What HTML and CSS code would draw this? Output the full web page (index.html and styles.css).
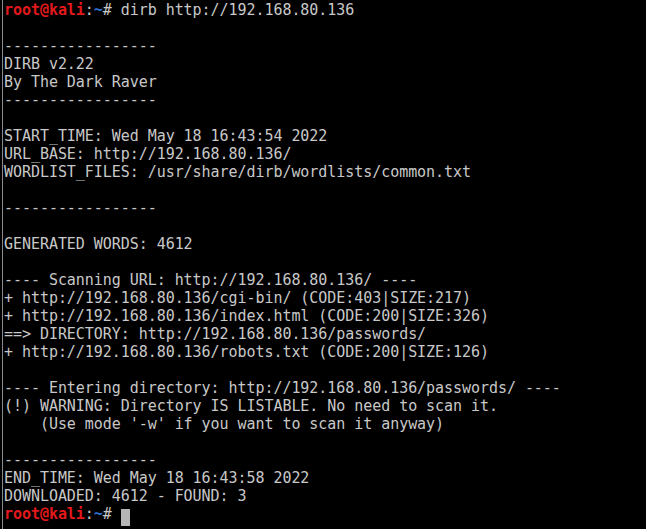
FILE: index.html
```html
<!DOCTYPE html>
<html>
<head>
<meta charset="utf-8">
<link rel="stylesheet" href="styles.css">
</head>
<body>
<div class="term">
<pre class="out"><span class="user">root@kali</span>:<span class="path">~</span># dirb http://192.168.80.136

-----------------
DIRB v2.22    
By The Dark Raver
-----------------

START_TIME: Wed May 18 16:43:54 2022
URL_BASE: http://192.168.80.136/
WORDLIST_FILES: /usr/share/dirb/wordlists/common.txt

-----------------

GENERATED WORDS: 4612

---- Scanning URL: http://192.168.80.136/ ----
+ http://192.168.80.136/cgi-bin/ (CODE:403|SIZE:217)
+ http://192.168.80.136/index.html (CODE:200|SIZE:326)
==&gt; DIRECTORY: http://192.168.80.136/passwords/
+ http://192.168.80.136/robots.txt (CODE:200|SIZE:126)

---- Entering directory: http://192.168.80.136/passwords/ ----
(!) WARNING: Directory IS LISTABLE. No need to scan it.
    (Use mode '-w' if you want to scan it anyway)

-----------------
END_TIME: Wed May 18 16:43:58 2022
DOWNLOADED: 4612 - FOUND: 3
<span class="user">root@kali</span>:<span class="path">~</span># <span class="cursor"> </span></pre>
</div>
</body>
</html>
```
FILE: styles.css
```css
html, body {
  margin: 0;
  padding: 0;
  background: #000;
  height: 100%;
}
.term {
  margin-left: 2px;
  border-left: 1px solid #8a8a8a;
  height: 529px;
  padding-left: 1px;
  padding-top: 1px;
  box-sizing: border-box;
}
.out {
  margin: 0;
  font-family: "DejaVu Sans Mono", monospace;
  font-size: 15px;
  line-height: 18px;
  letter-spacing: -0.05px;
  color: #c8c8c8;
}
.user {
  color: #e3191c;
  font-weight: bold;
}
.path {
  color: #2f6fd0;
  font-weight: bold;
}
.cursor {
  display: inline-block;
  width: 9px;
  height: 17px;
  vertical-align: -4px;
  background: #b5b5b5;
}
```
